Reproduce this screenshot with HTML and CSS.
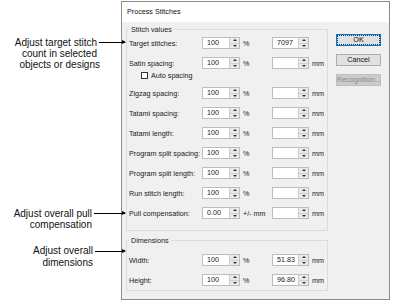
FILE: index.html
```html
<!DOCTYPE html>
<html lang="en">
<head>
    <meta charset="UTF-8">
    <meta name="viewport" content="width=device-width, initial-scale=1.0">
    <title>Process Stitches</title>
    <link rel="stylesheet" href="styles.css">
</head>
<body>
    <div class="page">
        <!-- Callouts on the left -->
        <div class="notes">
            <div class="note note-target">
                <div class="note-head"><span>Adjust target stitch</span><i class="leader"></i></div>
                <div class="note-line">count in selected</div>
                <div class="note-line note-last">objects or designs</div>
            </div>
            <div class="note note-pull">
                <div class="note-head"><span>Adjust overall pull</span><i class="leader"></i></div>
                <div class="note-line">compensation</div>
            </div>
            <div class="note note-dims">
                <div class="note-head"><span>Adjust overall</span><i class="leader"></i></div>
                <div class="note-line">dimensions</div>
            </div>
        </div>

        <!-- Dialog -->
        <div class="dialog">
            <div class="titlebar">Process Stitches</div>
            <div class="dialog-body">
                <div class="groups">
                    <fieldset class="group group-stitch">
                        <legend>Stitch values</legend>
                        <div class="row">
                            <span class="label">Target stitches:</span>
                            <span class="spinbox"><span class="val">100</span><span class="spin"><b class="up"></b><b class="down"></b></span></span>
                            <span class="unit">%</span>
                            <span class="spinbox spinbox-2"><span class="val">7097</span><span class="spin"><b class="up"></b><b class="down"></b></span></span>
                        </div>
                        <div class="row">
                            <span class="label">Satin spacing:</span>
                            <span class="spinbox"><span class="val">100</span><span class="spin"><b class="up"></b><b class="down"></b></span></span>
                            <span class="unit">%</span>
                            <span class="spinbox spinbox-2"><span class="val"></span><span class="spin"><b class="up"></b><b class="down"></b></span></span>
                            <span class="unit unit-2">mm</span>
                        </div>
                        <div class="row row-check">
                            <span class="checkbox"></span>
                            <span class="check-label">Auto spacing</span>
                        </div>
                        <div class="row">
                            <span class="label">Zigzag spacing:</span>
                            <span class="spinbox"><span class="val">100</span><span class="spin"><b class="up"></b><b class="down"></b></span></span>
                            <span class="unit">%</span>
                            <span class="spinbox spinbox-2"><span class="val"></span><span class="spin"><b class="up"></b><b class="down"></b></span></span>
                            <span class="unit unit-2">mm</span>
                        </div>
                        <div class="row">
                            <span class="label">Tatami spacing:</span>
                            <span class="spinbox"><span class="val">100</span><span class="spin"><b class="up"></b><b class="down"></b></span></span>
                            <span class="unit">%</span>
                            <span class="spinbox spinbox-2"><span class="val"></span><span class="spin"><b class="up"></b><b class="down"></b></span></span>
                            <span class="unit unit-2">mm</span>
                        </div>
                        <div class="row">
                            <span class="label">Tatami length:</span>
                            <span class="spinbox"><span class="val">100</span><span class="spin"><b class="up"></b><b class="down"></b></span></span>
                            <span class="unit">%</span>
                            <span class="spinbox spinbox-2"><span class="val"></span><span class="spin"><b class="up"></b><b class="down"></b></span></span>
                            <span class="unit unit-2">mm</span>
                        </div>
                        <div class="row">
                            <span class="label">Program split spacing:</span>
                            <span class="spinbox"><span class="val">100</span><span class="spin"><b class="up"></b><b class="down"></b></span></span>
                            <span class="unit">%</span>
                            <span class="spinbox spinbox-2"><span class="val"></span><span class="spin"><b class="up"></b><b class="down"></b></span></span>
                            <span class="unit unit-2">mm</span>
                        </div>
                        <div class="row">
                            <span class="label">Program split length:</span>
                            <span class="spinbox"><span class="val">100</span><span class="spin"><b class="up"></b><b class="down"></b></span></span>
                            <span class="unit">%</span>
                            <span class="spinbox spinbox-2"><span class="val"></span><span class="spin"><b class="up"></b><b class="down"></b></span></span>
                            <span class="unit unit-2">mm</span>
                        </div>
                        <div class="row">
                            <span class="label">Run stitch length:</span>
                            <span class="spinbox"><span class="val">100</span><span class="spin"><b class="up"></b><b class="down"></b></span></span>
                            <span class="unit">%</span>
                            <span class="spinbox spinbox-2"><span class="val"></span><span class="spin"><b class="up"></b><b class="down"></b></span></span>
                            <span class="unit unit-2">mm</span>
                        </div>
                        <div class="row">
                            <span class="label">Pull compensation:</span>
                            <span class="spinbox"><span class="val">0.00</span><span class="spin"><b class="up"></b><b class="down"></b></span></span>
                            <span class="unit">+/- mm</span>
                            <span class="spinbox spinbox-2"><span class="val"></span><span class="spin"><b class="up"></b><b class="down"></b></span></span>
                            <span class="unit unit-2">mm</span>
                        </div>
                    </fieldset>

                    <fieldset class="group group-dims">
                        <legend>Dimensions</legend>
                        <div class="row">
                            <span class="label">Width:</span>
                            <span class="spinbox"><span class="val">100</span><span class="spin"><b class="up"></b><b class="down"></b></span></span>
                            <span class="unit">%</span>
                            <span class="spinbox spinbox-2"><span class="val">51.83</span><span class="spin"><b class="up"></b><b class="down"></b></span></span>
                            <span class="unit unit-2">mm</span>
                        </div>
                        <div class="row">
                            <span class="label">Height:</span>
                            <span class="spinbox"><span class="val">100</span><span class="spin"><b class="up"></b><b class="down"></b></span></span>
                            <span class="unit">%</span>
                            <span class="spinbox spinbox-2"><span class="val">96.80</span><span class="spin"><b class="up"></b><b class="down"></b></span></span>
                            <span class="unit unit-2">mm</span>
                        </div>
                    </fieldset>
                </div>

                <div class="buttons">
                    <button class="btn btn-default">OK</button>
                    <button class="btn">Cancel</button>
                    <button class="btn btn-disabled">Recognition...</button>
                </div>
            </div>
        </div>
    </div>
</body>
</html>
```

FILE: styles.css
```css
/* Page */
body {
    margin: 0;
    background-color: #fff;
    font-family: 'Liberation Sans', Arial, sans-serif;
    color: #1a1a1a;
    overflow: hidden;
}

.page {
    display: flex;
    width: 399px;
    height: 307px;
}

/* Callouts */
.notes {
    width: 121px;
    flex-shrink: 0;
    display: flex;
    flex-direction: column;
    font-size: 10px;
    line-height: 11px;
    color: #111;
    position: relative;
    z-index: 1;
}

.note {
    margin-right: -4px;
}

.note-target {
    margin-top: 37px;
}

.note-pull {
    margin-top: 138px;
}

.note-dims {
    margin-top: 15px;
    line-height: 12px;
}

.note-head {
    display: flex;
    justify-content: flex-end;
    align-items: center;
}

.note-line {
    text-align: right;
}

.note-target .note-line {
    padding-right: 28px;
}

.note-target .note-last {
    padding-right: 25px;
}

.note-pull .note-line {
    padding-right: 33px;
}

.note-dims .note-line {
    padding-right: 32px;
}

.leader {
    display: block;
    height: 1px;
    background-color: #000;
    margin-left: 2px;
    position: relative;
}

.leader::after {
    content: "";
    position: absolute;
    right: -1px;
    top: -2px;
    border-left: 4px solid #000;
    border-top: 2.5px solid transparent;
    border-bottom: 2.5px solid transparent;
}

.note-target .leader {
    width: 26px;
}

.note-pull .leader {
    width: 31px;
}

.note-dims .leader {
    width: 30px;
}

/* Dialog */
.dialog {
    margin-top: 1px;
    width: 269px;
    height: 299px;
    box-sizing: border-box;
    border: 1px solid #8c8c8c;
    background-color: #f0f0f0;
    display: flex;
    flex-direction: column;
    font-size: 7.2px;
}

.titlebar {
    height: 20px;
    line-height: 19px;
    padding-left: 5px;
    background-color: #fff;
    color: #111;
}

.dialog-body {
    display: flex;
    padding: 3px 0 0 4px;
}

.groups {
    width: 202px;
    display: flex;
    flex-direction: column;
}

/* Group boxes */
.group {
    margin: 0;
    min-width: 0;
    border: 1px solid #dcdcdc;
    padding: 2px 2px 10px 2px;
}

.group legend {
    padding: 0 2px;
    line-height: 9px;
    color: #222;
}

.group-dims {
    margin-top: 5px;
    padding-top: 8px;
    padding-bottom: 3px;
}

.row {
    display: flex;
    align-items: center;
    height: 14px;
}

.row + .row {
    margin-top: 6px;
}

.row.row-check {
    margin-top: 0;
    height: 10px;
}

.label {
    width: 73px;
    flex-shrink: 0;
    white-space: nowrap;
}

.row-check .checkbox {
    width: 7px;
    height: 7px;
    box-sizing: border-box;
    border: 1px solid #333;
    background-color: #fff;
    margin-left: 12px;
}

.check-label {
    margin-left: 3px;
}

/* Spin boxes */
.spinbox {
    width: 38px;
    height: 12px;
    box-sizing: border-box;
    border: 1px solid #bdbdbd;
    background-color: #fff;
    display: flex;
    flex-shrink: 0;
}

.spinbox-2 {
    width: 37px;
}

.spinbox .val {
    flex: 1;
    padding-left: 4px;
    line-height: 10px;
}

.spin {
    width: 9px;
    border-left: 1px solid #cfcfcf;
    background-color: #e9e9e9;
    display: flex;
    flex-direction: column;
}

.spin b {
    flex: 1;
    display: flex;
    align-items: center;
    justify-content: center;
}

.spin b.up {
    border-bottom: 1px solid #cfcfcf;
}

.spin b.up::before {
    content: "";
    border-left: 2px solid transparent;
    border-right: 2px solid transparent;
    border-bottom: 2px solid #333;
}

.spin b.down::before {
    content: "";
    border-left: 2px solid transparent;
    border-right: 2px solid transparent;
    border-top: 2px solid #333;
}

.unit {
    width: 32px;
    box-sizing: border-box;
    padding-left: 3px;
    flex-shrink: 0;
    white-space: nowrap;
}

.unit-2 {
    width: auto;
}

/* Buttons */
.buttons {
    margin-left: 8px;
    margin-top: 9px;
    width: 45px;
    display: flex;
    flex-direction: column;
    gap: 8px;
}

.btn {
    height: 12px;
    padding: 0;
    box-sizing: border-box;
    border: 1px solid #adadad;
    background-color: #e1e1e1;
    font-family: inherit;
    font-size: 7.2px;
    color: #111;
    line-height: 10px;
}

.btn-default {
    border-color: #0078d7;
    outline: 1px dotted #333;
    outline-offset: -2px;
}

.btn-disabled {
    background-color: #cccccc;
    border-color: #bfbfbf;
    color: #8a8a8a;
}
```
